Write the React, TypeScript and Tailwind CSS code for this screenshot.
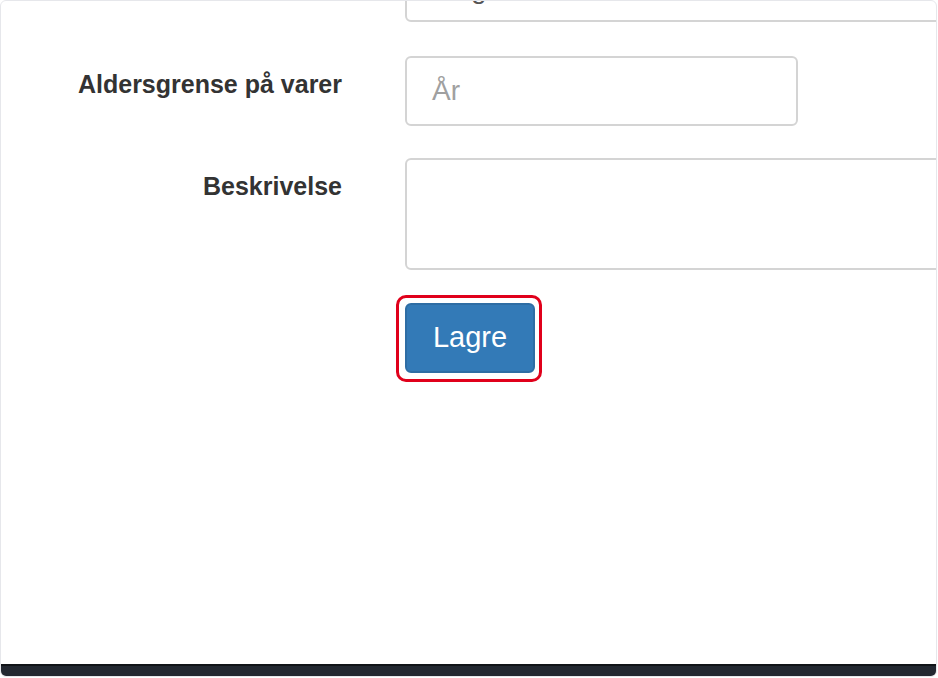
export default function App() {
  return (
    <div className="w-[938px] h-[678px] bg-white font-['Liberation_Sans',Arial,sans-serif]">
      <div className="w-[937px] h-[677px] rounded-[6px] border border-[#e6e7eb] overflow-hidden flex flex-col">
        {/* form */}
        <div className="flex-1 overflow-hidden">
          <div className="flex flex-col -mt-[49px]">
            {/* select (scrolled off top) */}
            <div className="flex gap-[63px]">
              <div className="w-[341px] shrink-0"></div>
              <div className="w-[560px] shrink-0 h-[70px] rounded-[6px] border-2 border-[#d4d4d4] flex items-center pl-[25px] pt-[4px] text-[28px] text-[#555]">
                Velg
              </div>
            </div>

            {/* Aldersgrense */}
            <div className="flex gap-[63px] mt-[34px]">
              <label className="w-[341px] shrink-0 text-right pt-[13px] text-[25px] leading-[30px] font-bold text-[#333]">
                Aldersgrense på varer
              </label>
              <div className="w-[393px] shrink-0 h-[70px] rounded-[6px] border-2 border-[#d4d4d4] flex items-center pl-[25px] text-[28px] text-[#a0a0a0]">
                År
              </div>
            </div>

            {/* Beskrivelse */}
            <div className="flex gap-[63px] mt-[32px]">
              <label className="w-[341px] shrink-0 text-right pt-[13px] text-[25px] leading-[30px] font-bold text-[#333]">
                Beskrivelse
              </label>
              <div className="w-[560px] shrink-0 h-[112px] rounded-[6px] border-2 border-[#d4d4d4]"></div>
            </div>

            {/* save */}
            <div className="flex gap-[63px] mt-[25px]">
              <div className="w-[341px] shrink-0"></div>
              <div className="-ml-[9px] rounded-[10px] border-[3px] border-[#e0001b] pt-[5px] pb-[6px] pl-[6px] pr-[4px]">
                <button className="w-[130px] h-[70px] rounded-[6px] bg-[#337ab7] border-2 border-[#2e6da4] text-white text-[29px] flex items-center justify-center">
                  Lagre
                </button>
              </div>
            </div>
          </div>
        </div>

        {/* bottom bar */}
        <div className="h-[12px] shrink-0 border-t-2 border-[#111418] bg-[#232831]"></div>
      </div>
    </div>
  );
}
